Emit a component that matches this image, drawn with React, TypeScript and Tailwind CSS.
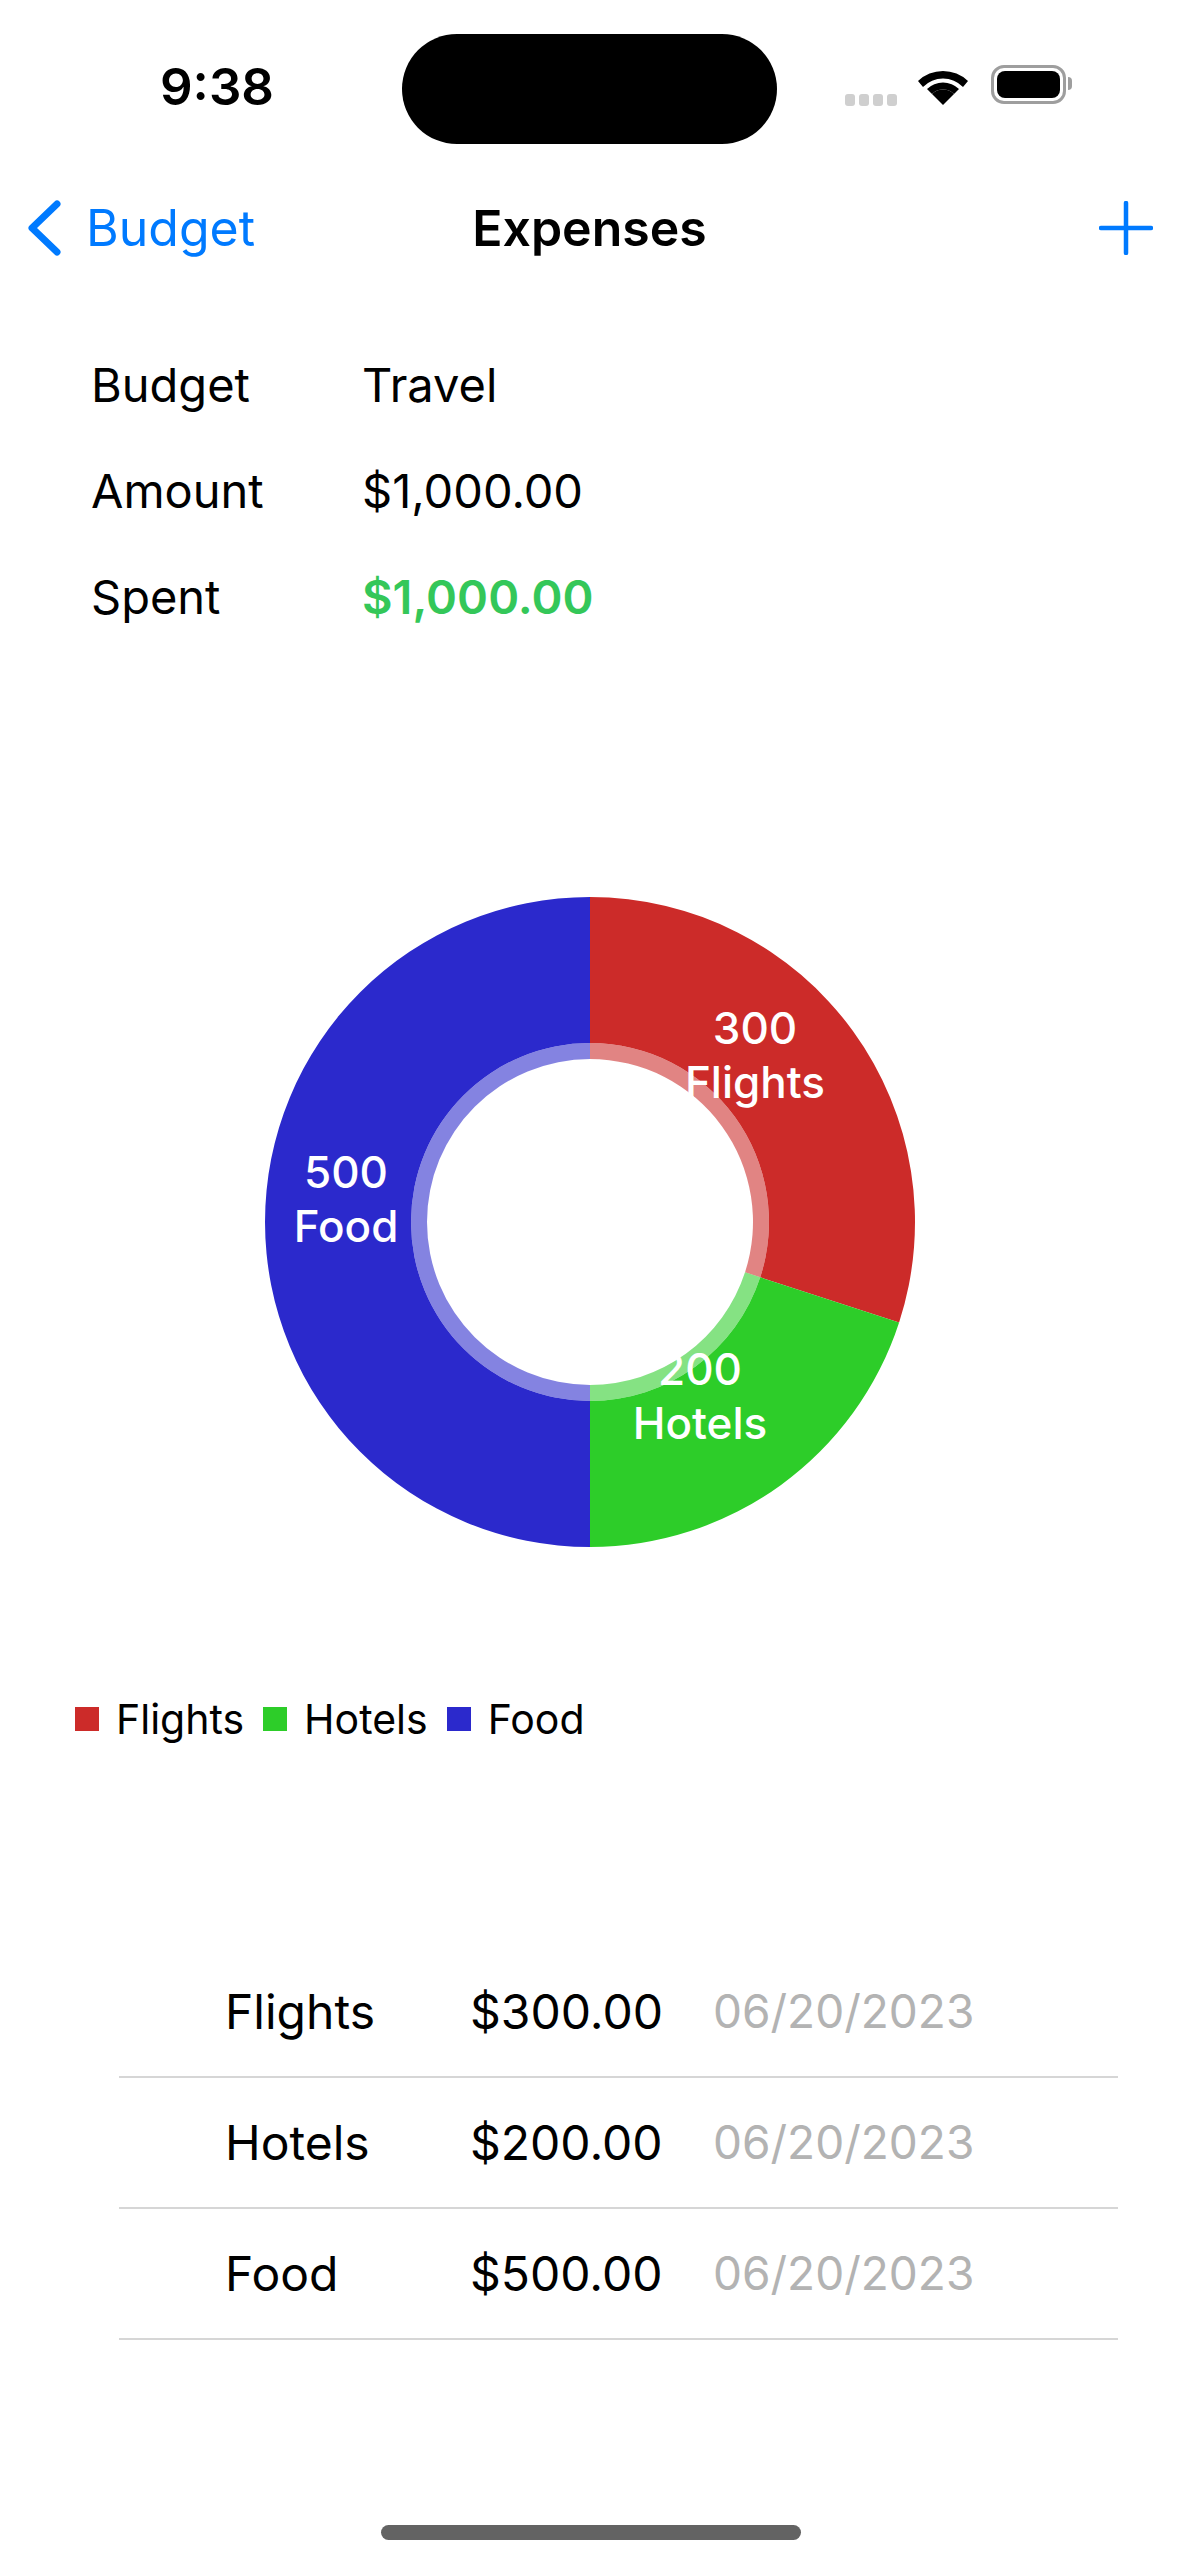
import React from "react";

const CX = 350, CY = 350;
function pt(r: number, deg: number) {
  const a = ((deg - 90) * Math.PI) / 180;
  return `${CX + r * Math.cos(a)} ${CY + r * Math.sin(a)}`;
}
function sector(r0: number, r1: number, a0: number, a1: number) {
  const large = a1 - a0 > 180 ? 1 : 0;
  return `M${pt(r1, a0)} A${r1} ${r1} 0 ${large} 1 ${pt(r1, a1)} L${pt(r0, a1)} A${r0} ${r0} 0 ${large} 0 ${pt(r0, a0)} Z`;
}
const slices = [
  { c: "#cc2b29", a0: 0, a1: 108 },
  { c: "#2dcd29", a0: 108, a1: 180 },
  { c: "#2b29cc", a0: 180, a1: 360 },
];

function Donut() {
  return (
    <svg width="700" height="700" viewBox="0 0 700 700" className="block">
      {slices.map((s) => (
        <g key={s.c}>
          <path d={sector(179, 325, s.a0, s.a1)} fill={s.c} />
          <path d={sector(163, 179, s.a0, s.a1)} fill={s.c} fillOpacity="0.58" />
        </g>
      ))}
    </svg>
  );
}

function Label({ v, n, cls }: { v: string; n: string; cls: string }) {
  return (
    <div className={`absolute flex flex-col items-center text-white font-medium text-[44px] leading-[54px] ${cls}`}>
      <span>{v}</span>
      <span>{n}</span>
    </div>
  );
}

function Row({ k, v, green }: { k: string; v: string; green?: boolean }) {
  return (
    <div className="flex items-center h-[106px] text-[47px] text-black">
      <span className="w-[271px]">{k}</span>
      <span className={green ? "text-[#34c759] font-semibold" : ""}>{v}</span>
    </div>
  );
}

function TRow({ n, a }: { n: string; a: string }) {
  return (
    <div className="flex items-center h-[131px] border-b-2 border-[#d6d6d6] pl-[106px] pr-0 text-[48px] text-black">
      <span className="w-[245px]">{n}</span>
      <span className="w-[243px]">{a}</span>
      <span className="text-[#b3b3b3] text-[46px]">06/20/2023</span>
    </div>
  );
}

function Legend({ c, n }: { c: string; n: string }) {
  return (
    <div className="flex items-center gap-[17px]">
      <div className="w-[24px] h-[24px]" style={{ backgroundColor: c }} />
      <span>{n}</span>
    </div>
  );
}

export default function App() {
  return (
    <div
      className="relative w-[1179px] h-[2556px] bg-white overflow-hidden flex flex-col"
      style={{ fontFamily: "Inter, 'Liberation Sans', sans-serif" }}
    >
      {/* status bar */}
      <div className="h-[172px] flex items-start shrink-0">
        <div className="w-[402px] pt-[56px] pl-[160px] text-[51px] leading-[62px] font-semibold text-black">9:38</div>
        <div className="w-[375px] h-[110px] mt-[34px] bg-black rounded-[55px]" />
        <div className="flex-1 flex items-start pt-[68px] pl-[68px]">
          <div className="flex gap-[4px] mt-[26px] mr-[20px]">
            {[0, 1, 2, 3].map((i) => (
              <div key={i} className="w-[10px] h-[12px] rounded-[3px] bg-[#cfcfcf]" />
            ))}
          </div>
          <svg width="52" height="38" viewBox="0 0 52 38" className="mt-[-1px]">
            <path d="M26 38 L15 27 A16 16 0 0 1 37 27 Z" fill="#000" />
            <path d="M26 6 A36 36 0 0 1 51 16" fill="none" stroke="#000" strokeWidth="0" />
            <path d="M1 14 A36 36 0 0 1 51 14 L46 20 A28 28 0 0 0 6 20 Z" fill="#000" />
            <path d="M10 23 A23 23 0 0 1 42 23 L37 28 A16 16 0 0 0 15 28 Z" fill="#000" transform="translate(0 -1)" />
          </svg>
          <div className="relative ml-[22px] mt-[-3px] w-[75px] h-[39px] border-[3px] border-[#9e9e9e] rounded-[13px] p-[3px]">
            <div className="w-full h-full bg-black rounded-[8px]" />
            <div className="absolute right-[-9px] top-[9px] w-[4px] h-[13px] bg-[#9e9e9e] rounded-r-[4px]" />
          </div>
        </div>
      </div>

      {/* nav */}
      <div className="relative h-[112px] shrink-0 flex items-center justify-between pl-[26px] pr-[26px]">
        <div className="flex items-center text-[#007aff] text-[50px]">
          <svg width="36" height="58" viewBox="0 0 36 58" className="mr-[24px]">
            <path d="M31 5 L6 29 L31 53" fill="none" stroke="#007aff" strokeWidth="7" strokeLinecap="round" strokeLinejoin="round" />
          </svg>
          <span>Budget</span>
        </div>
        <div className="absolute left-0 right-0 text-center text-[50px] font-semibold text-black">Expenses</div>
        <svg width="54" height="54" viewBox="0 0 54 54">
          <path d="M27 2 V52 M2 27 H52" stroke="#007aff" strokeWidth="4.5" strokeLinecap="round" />
        </svg>
      </div>

      {/* info */}
      <div className="pl-[91px] pt-[48px] shrink-0">
        <Row k="Budget" v="Travel" />
        <Row k="Amount" v="$1,000.00" />
        <Row k="Spent" v="$1,000.00" green />
      </div>

      {/* chart */}
      <div className="mt-[222px] flex justify-center shrink-0">
        <div className="relative w-[700px] h-[700px] mr-[-1px]">
          <Donut />
          <Label v="300" n="Flights" cls="left-[415px] top-[129px] w-[200px]" />
          <Label v="200" n="Hotels" cls="left-[360px] top-[470px] w-[200px]" />
          <Label v="500" n="Food" cls="left-[6px] top-[273px] w-[200px]" />
        </div>
      </div>

      {/* legend */}
      <div className="mt-[122px] pl-[75px] flex gap-[19px] text-[41px] leading-[50px] text-black shrink-0">
        <Legend c="#cc2b29" n="Flights" />
        <Legend c="#2dcd29" n="Hotels" />
        <Legend c="#2b29cc" n="Food" />
      </div>

      {/* table */}
      <div className="mt-[203px] ml-[119px] w-[999px] shrink-0">
        <TRow n="Flights" a="$300.00" />
        <TRow n="Hotels" a="$200.00" />
        <TRow n="Food" a="$500.00" />
      </div>

      <div className="absolute left-[380px] bottom-[122px] w-[421px] h-[15px] rounded-full bg-[#5a5a5a] hidden" />
      <div className="mt-auto mb-[16px] self-center w-[420px] h-[15px] rounded-full bg-[#636363] ml-[2px]" />
    </div>
  );
}
